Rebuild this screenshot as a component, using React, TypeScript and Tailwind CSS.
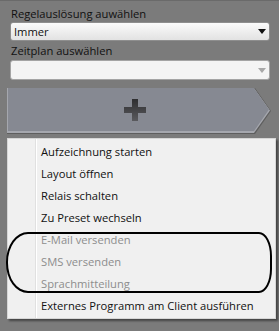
const items = [
  { label: 'Aufzeichnung starten', disabled: false },
  { label: 'Layout öffnen', disabled: false },
  { label: 'Relais schalten', disabled: false },
  { label: 'Zu Preset wechseln', disabled: false },
  { label: 'E-Mail versenden', disabled: true },
  { label: 'SMS versenden', disabled: true },
  { label: 'Sprachmitteilung', disabled: true },
  { label: 'Externes Programm am Client ausführen', disabled: false },
];

function Caret({ disabled }: { disabled?: boolean }) {
  return (
    <svg width="8" height="5" viewBox="0 0 8 5" className="shrink-0">
      <path d="M0 0 H8 L4 5 Z" fill={disabled ? '#a8a8a8' : '#111'} />
    </svg>
  );
}

export default function App() {
  return (
    <div className="relative w-[279px] h-[331px] bg-[#7b7b7b] border-t border-[#6a6a6a] overflow-hidden font-['Open_Sans',sans-serif] text-[11.2px] text-[#111]">
      <div className="pl-[11px] pr-[9px] pt-[5px] flex flex-col">
        <div className="leading-[16px] h-[16px]">Regelauslösung auwählen</div>
        <div className="h-[19px] rounded-[3px] border border-[#8e8e8e] bg-gradient-to-b from-[#fbfbfb] to-[#e2e2e2] flex items-center justify-between pl-[3px] pr-[3px] -ml-[1px]">
          <span className="leading-[16px]">Immer</span>
          <Caret />
        </div>
        <div className="leading-[16px] h-[16px] mt-[2px]">Zeitplan auswählen</div>
        <div className="h-[20px] mt-[1px] rounded-[3px] border border-[#a4a4a4] bg-[#f4f4f4] flex items-center justify-end pr-[3px] -ml-[1px]">
          <Caret disabled />
        </div>
      </div>

      {/* add button, arrow shaped */}
      <div className="ml-[7px] mt-[8px] w-[264px] h-[46px] bg-[#5e5e5e] [clip-path:polygon(0_0,248px_0,100%_50%,248px_100%,0_100%)]">
        <div className="w-[263px] h-[45px] bg-[#a5a7ae] [clip-path:polygon(0_0,247px_0,100%_50%,247px_100%,0_100%)]">
          <div className="ml-[1px] mt-[1px] w-[261px] h-[43px] bg-[#868992] flex items-center justify-center [clip-path:polygon(0_0,246px_0,100%_50%,246px_100%,0_100%)]">
            <svg width="22" height="22" viewBox="0 0 22 22" className="-ml-[8px]">
              <defs>
                <linearGradient id="pl" x1="0" y1="0" x2="0" y2="1">
                  <stop offset="0" stopColor="#2e2e30" />
                  <stop offset="1" stopColor="#5a5a5e" />
                </linearGradient>
              </defs>
              <path d="M8 0 H14 V8 H22 V14 H14 V22 H8 V14 H0 V8 H8 Z" fill="url(#pl)" />
            </svg>
          </div>
        </div>
      </div>

      {/* context menu */}
      <div className="ml-[7px] mt-[4px] w-[269px] h-[181px] bg-[#f0f0f0] border border-[#d6d6d6] shadow-[2px_2px_2px_rgba(0,0,0,0.45)] relative py-[2px]">
        <div className="absolute left-[27px] top-0 bottom-0 w-[1px] bg-[#e0e0e0]" />
        <div className="absolute left-[28px] top-0 bottom-0 w-[1px] bg-white" />
        {items.map((it) => (
          <div
            key={it.label}
            className={`h-[22px] flex items-center pl-[33px] leading-[16px] ${it.disabled ? 'text-[#8d8d8d]' : 'text-[#111]'}`}
          >
            {it.label}
          </div>
        ))}
      </div>

      {/* hand-drawn marker around disabled items */}
      <div className="absolute left-[6px] top-[231px] w-[266px] h-[61px] border-[2px] border-black rounded-[22px_13px_13px_22px/30px_24px_24px_30px]" />
    </div>
  );
}
